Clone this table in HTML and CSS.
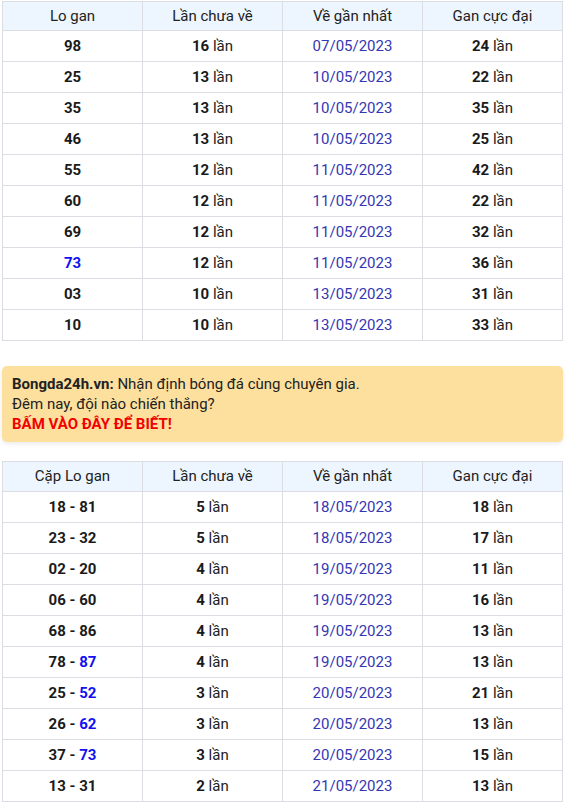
FILE: index.html
```html
<!DOCTYPE html>
<html lang="vi">
<head>
<meta charset="utf-8">
<link rel="stylesheet" href="styles.css">
</head>
<body>
<div class="page">
  <table class="gan">
    <thead>
      <tr><th>Lo gan</th><th>Lần chưa về</th><th>Về gần nhất</th><th>Gan cực đại</th></tr>
    </thead>
    <tbody>
      <tr><td class="num">98</td><td><b>16</b> lần</td><td class="date">07/05/2023</td><td><b>24</b> lần</td></tr>
      <tr><td class="num">25</td><td><b>13</b> lần</td><td class="date">10/05/2023</td><td><b>22</b> lần</td></tr>
      <tr><td class="num">35</td><td><b>13</b> lần</td><td class="date">10/05/2023</td><td><b>35</b> lần</td></tr>
      <tr><td class="num">46</td><td><b>13</b> lần</td><td class="date">10/05/2023</td><td><b>25</b> lần</td></tr>
      <tr><td class="num">55</td><td><b>12</b> lần</td><td class="date">11/05/2023</td><td><b>42</b> lần</td></tr>
      <tr><td class="num">60</td><td><b>12</b> lần</td><td class="date">11/05/2023</td><td><b>22</b> lần</td></tr>
      <tr><td class="num">69</td><td><b>12</b> lần</td><td class="date">11/05/2023</td><td><b>32</b> lần</td></tr>
      <tr><td class="num"><span class="blue">73</span></td><td><b>12</b> lần</td><td class="date">11/05/2023</td><td><b>36</b> lần</td></tr>
      <tr><td class="num">03</td><td><b>10</b> lần</td><td class="date">13/05/2023</td><td><b>31</b> lần</td></tr>
      <tr><td class="num">10</td><td><b>10</b> lần</td><td class="date">13/05/2023</td><td><b>33</b> lần</td></tr>
    </tbody>
  </table>

  <div class="banner">
    <div><b>Bongda24h.vn:</b> Nhận định bóng đá cùng chuyên gia.</div>
    <div>Đêm nay, đội nào chiến thắng?</div>
    <div class="cta">BẤM VÀO ĐÂY ĐỂ BIẾT!</div>
  </div>

  <table class="gan gan-pairs">
    <thead>
      <tr><th>Cặp Lo gan</th><th>Lần chưa về</th><th>Về gần nhất</th><th>Gan cực đại</th></tr>
    </thead>
    <tbody>
      <tr><td class="num">18 - 81</td><td><b>5</b> lần</td><td class="date">18/05/2023</td><td><b>18</b> lần</td></tr>
      <tr><td class="num">23 - 32</td><td><b>5</b> lần</td><td class="date">18/05/2023</td><td><b>17</b> lần</td></tr>
      <tr><td class="num">02 - 20</td><td><b>4</b> lần</td><td class="date">19/05/2023</td><td><b>11</b> lần</td></tr>
      <tr><td class="num">06 - 60</td><td><b>4</b> lần</td><td class="date">19/05/2023</td><td><b>16</b> lần</td></tr>
      <tr><td class="num">68 - 86</td><td><b>4</b> lần</td><td class="date">19/05/2023</td><td><b>13</b> lần</td></tr>
      <tr><td class="num">78 - <span class="blue">87</span></td><td><b>4</b> lần</td><td class="date">19/05/2023</td><td><b>13</b> lần</td></tr>
      <tr><td class="num">25 - <span class="blue">52</span></td><td><b>3</b> lần</td><td class="date">20/05/2023</td><td><b>21</b> lần</td></tr>
      <tr><td class="num">26 - <span class="blue">62</span></td><td><b>3</b> lần</td><td class="date">20/05/2023</td><td><b>13</b> lần</td></tr>
      <tr><td class="num">37 - <span class="blue">73</span></td><td><b>3</b> lần</td><td class="date">20/05/2023</td><td><b>15</b> lần</td></tr>
      <tr><td class="num">13 - 31</td><td><b>2</b> lần</td><td class="date">21/05/2023</td><td><b>13</b> lần</td></tr>
    </tbody>
  </table>
</div>
</body>
</html>
```

FILE: styles.css
```css
html, body {
  margin: 0;
  padding: 0;
  background: #ffffff;
}
body {
  font-family: Roboto, "Liberation Sans", Arial, sans-serif;
  font-size: 15px;
  color: #222222;
}
.page {
  width: 561px;
  padding: 1px 0 0 2px;
}
.gan {
  width: 561px;
  border-collapse: collapse;
  table-layout: fixed;
}
.gan th,
.gan td {
  border: 1px solid #dcdde2;
  text-align: center;
  padding: 0;
  width: 25%;
}
.gan th {
  background: #edf6fe;
  font-weight: 400;
  height: 28px;
  line-height: 28px;
  font-size: 15px;
  color: #222222;
}
.gan-pairs th {
  height: 29px;
  line-height: 29px;
}
.gan td {
  height: 30px;
  line-height: 30px;
}
.gan td b,
.gan td.num {
  font-weight: 700;
  color: #1a1a1a;
}
.gan td.date {
  color: #3437b4;
}
.blue {
  color: #1010f0;
}
.banner {
  margin: 25px 0 19px;
  background: #fde09e;
  border-radius: 5px;
  box-shadow: 0 2px 4px rgba(0, 0, 0, 0.08);
  padding: 8px 10px;
  line-height: 20px;
  font-size: 15px;
  color: #222222;
}
.banner b {
  font-weight: 700;
}
.cta {
  color: #f20000;
  font-weight: 700;
}
```
